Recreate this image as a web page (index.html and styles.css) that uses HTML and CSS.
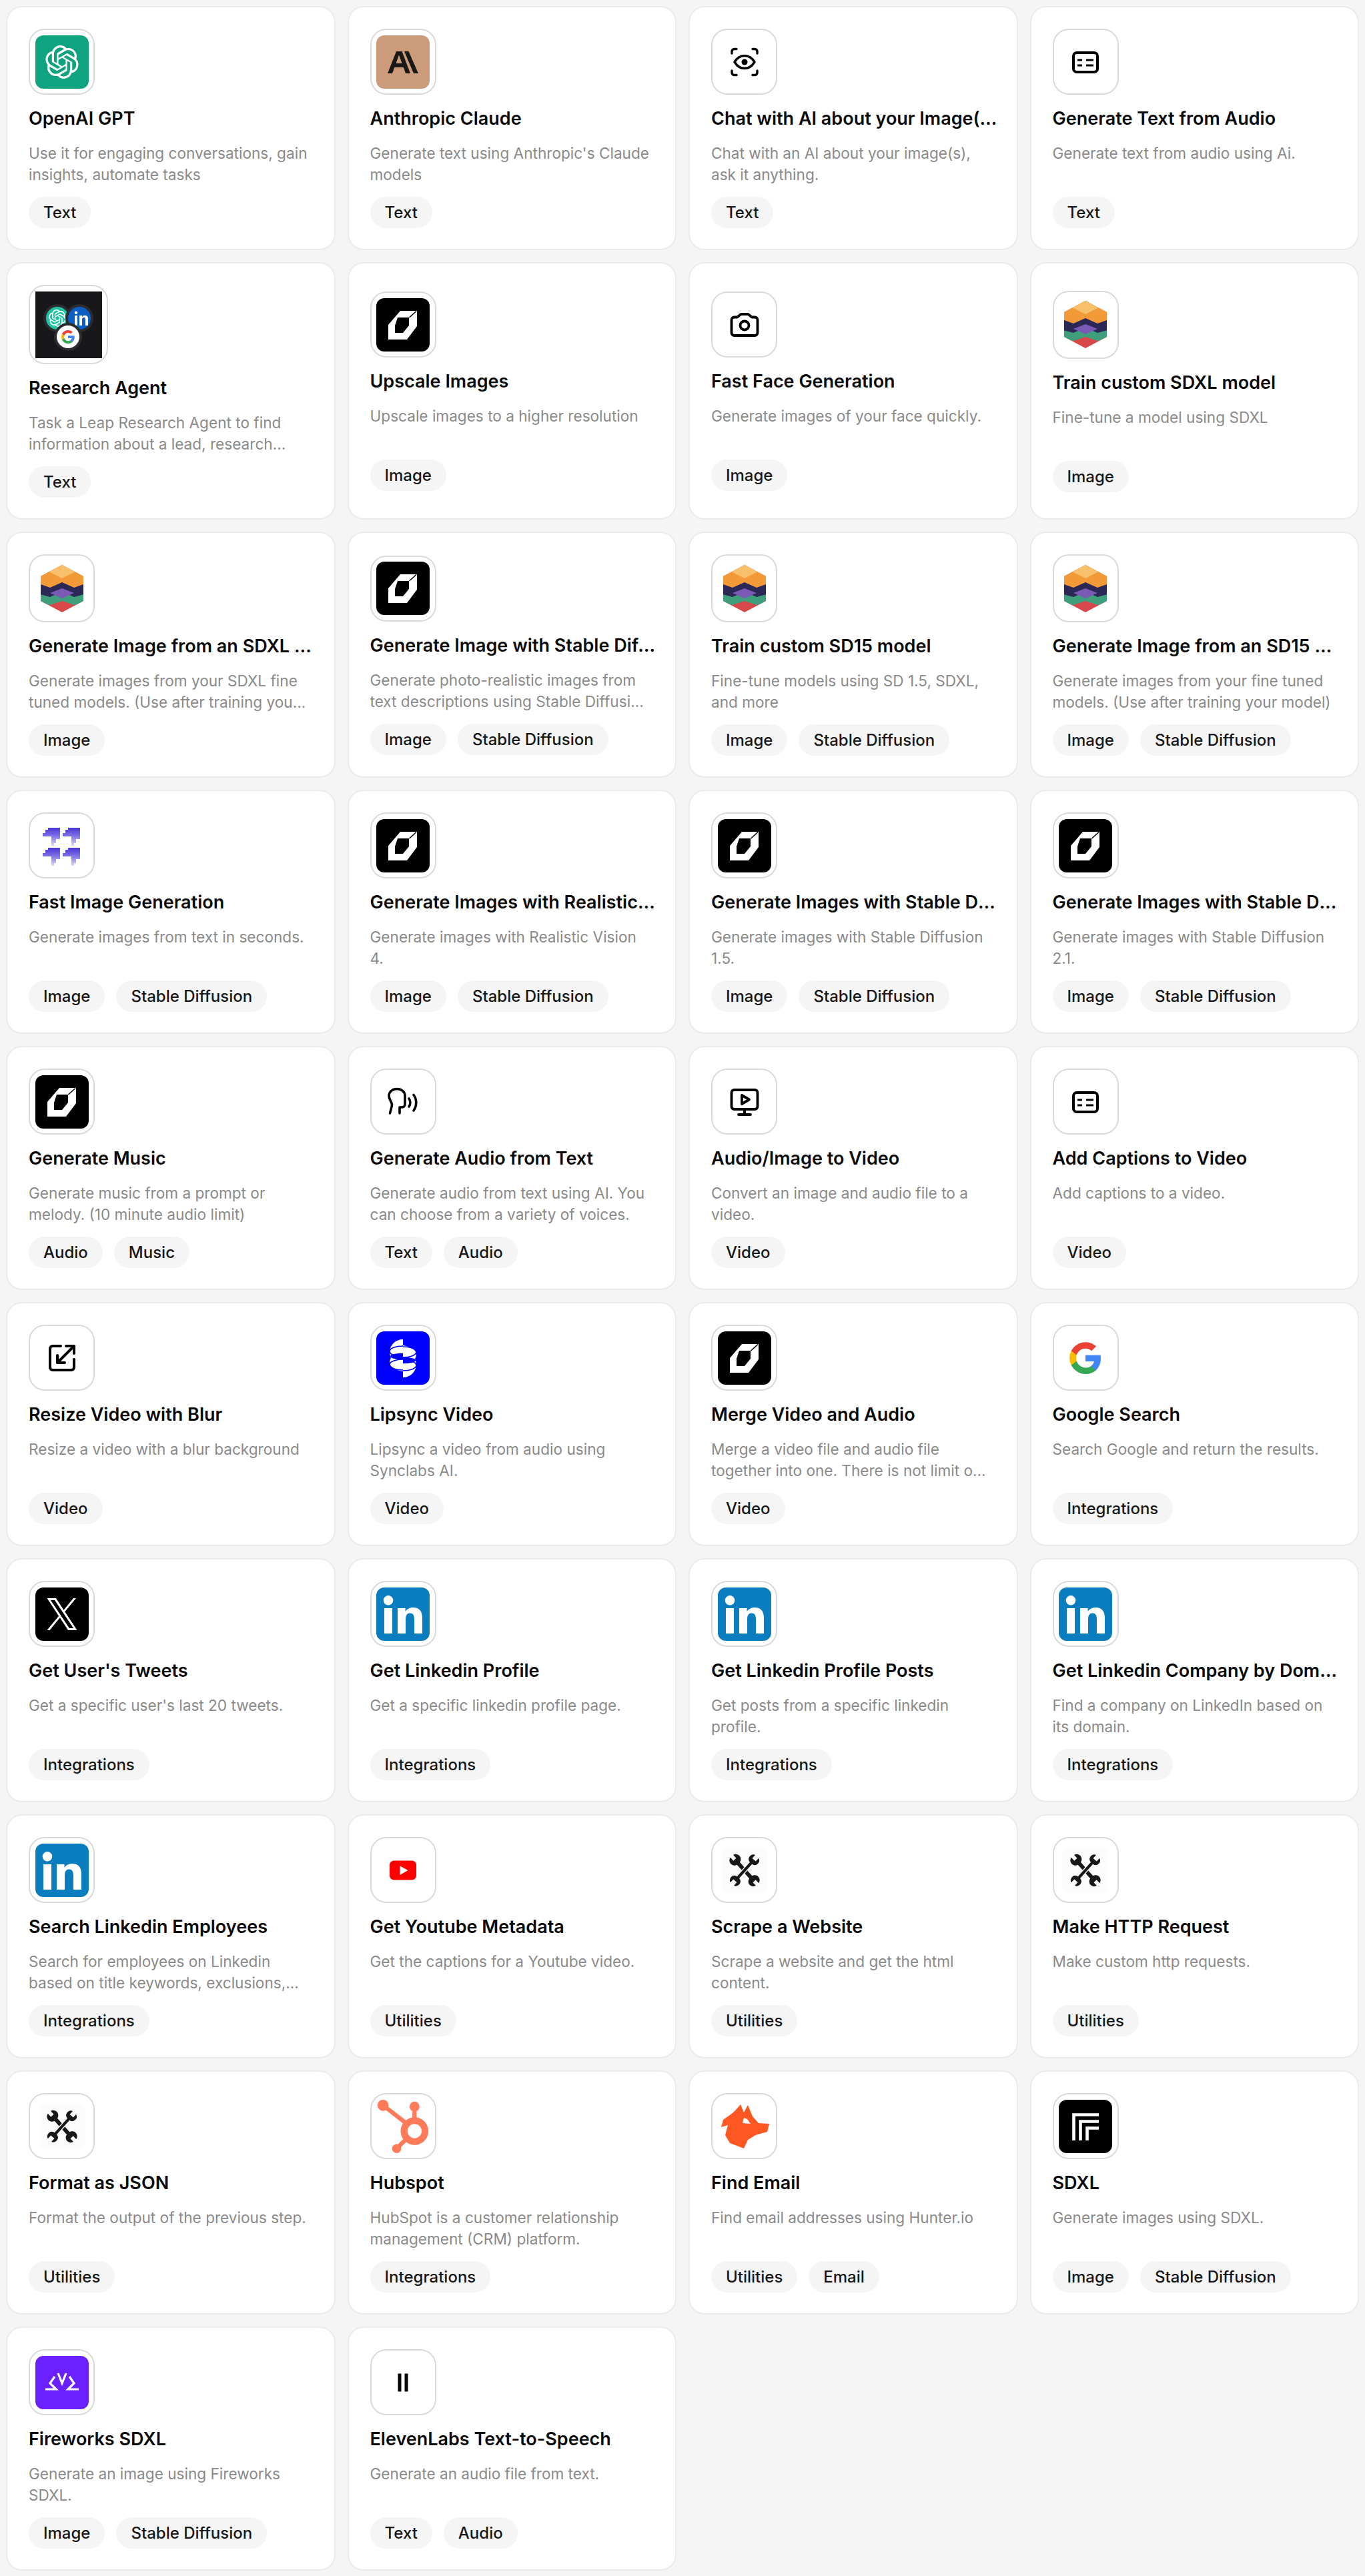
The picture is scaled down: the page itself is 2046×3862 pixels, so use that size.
FILE: index.html
```html
<!DOCTYPE html>
<html lang="en">
<head>
<meta charset="utf-8">
<title>Workflow steps</title>
<link rel="stylesheet" href="styles.css">
</head>
<body>
<svg class="defs" aria-hidden="true">
  <defs>
    <path id="knot" d="M22.2819 9.8211a5.9847 5.9847 0 0 0-.5157-4.9108 6.0462 6.0462 0 0 0-6.5098-2.9A6.0651 6.0651 0 0 0 4.9807 4.1818a5.9847 5.9847 0 0 0-3.9977 2.9 6.0462 6.0462 0 0 0 .7427 7.0966 5.98 5.98 0 0 0 .511 4.9107 6.051 6.051 0 0 0 6.5146 2.9001A5.9847 5.9847 0 0 0 13.2599 24a6.0557 6.0557 0 0 0 5.7718-4.2058 5.9894 5.9894 0 0 0 3.9977-2.9001 6.0557 6.0557 0 0 0-.7475-7.0729zm-9.022 12.6081a4.4755 4.4755 0 0 1-2.8764-1.0408l.1419-.0804 4.7783-2.7582a.7948.7948 0 0 0 .3927-.6813v-6.7369l2.02 1.1686a.071.071 0 0 1 .038.052v5.5826a4.504 4.504 0 0 1-4.4945 4.4944zm-9.6607-4.1254a4.4708 4.4708 0 0 1-.5346-3.0137l.142.0852 4.783 2.7582a.7712.7712 0 0 0 .7806 0l5.8428-3.3685v2.3324a.0804.0804 0 0 1-.0332.0615L9.74 19.9502a4.4992 4.4992 0 0 1-6.1408-1.6464zM2.3408 7.8956a4.485 4.485 0 0 1 2.3655-1.9728V11.6a.7664.7664 0 0 0 .3879.6765l5.8144 3.3543-2.0201 1.1685a.0757.0757 0 0 1-.071 0l-4.8303-2.7865A4.504 4.504 0 0 1 2.3408 7.872zm16.5963 3.8558L13.1038 8.364 15.1192 7.2a.0757.0757 0 0 1 .071 0l4.8303 2.7913a4.4944 4.4944 0 0 1-.6765 8.1042v-5.6772a.79.79 0 0 0-.407-.667zm2.0107-3.0231l-.142-.0852-4.7735-2.7818a.7759.7759 0 0 0-.7854 0L9.409 9.2297V6.8974a.0662.0662 0 0 1 .0284-.0615l4.8303-2.7866a4.4992 4.4992 0 0 1 6.6802 4.66zM8.3065 12.863l-2.02-1.1638a.0804.0804 0 0 1-.038-.0567V6.0742a4.4992 4.4992 0 0 1 7.3757-3.4537l-.142.0805L8.704 5.459a.7948.7948 0 0 0-.3927.6813zm1.0976-2.3654l2.602-1.4998 2.6069 1.4998v2.9994l-2.5974 1.4997-2.6067-1.4997Z"/>
    <g id="gletter">
      <path fill="#4285F4" d="M22.56 12.25c0-.78-.07-1.53-.2-2.25H12v4.26h5.92c-.26 1.37-1.04 2.53-2.21 3.31v2.77h3.57c2.08-1.92 3.28-4.74 3.28-8.09z"/>
      <path fill="#34A853" d="M12 23c2.97 0 5.46-.98 7.28-2.66l-3.57-2.77c-.98.66-2.23 1.06-3.71 1.06-2.86 0-5.29-1.93-6.16-4.53H2.18v2.84C3.99 20.53 7.7 23 12 23z"/>
      <path fill="#FBBC05" d="M5.84 14.09c-.22-.66-.35-1.36-.35-2.09s.13-1.43.35-2.09V7.07H2.18C1.43 8.55 1 10.22 1 12s.43 3.45 1.18 4.93l2.85-2.22.81-.62z"/>
      <path fill="#EA4335" d="M12 5.38c1.62 0 3.06.56 4.21 1.64l3.15-3.15C17.45 2.09 14.97 1 12 1 7.7 1 3.99 3.47 2.18 7.07l3.66 2.84c.87-2.6 3.3-4.53 6.16-4.53z"/>
    </g>
    <path id="wrench-shape" d="M-3 -14.500A7.900 7.900 0 0 1 -3 -30L-3 -23L3 -23L3 -30A7.900 7.900 0 0 1 3 -14.500L3 14.500A7.900 7.900 0 0 1 3 30L3 23L-3 23L-3 30A7.900 7.900 0 0 1 -3 14.500Z"/>
    <linearGradient id="fade" x1="0" y1="0" x2="0" y2="1">
      <stop offset="0" stop-color="#4a35d6"/>
      <stop offset=".45" stop-color="#7f70e6"/>
      <stop offset="1" stop-color="#ddd9fa"/>
    </linearGradient>
    <polygon id="step" fill="url(#fade)" points="8,0 26,0 26,17 20,17 20,23 17,23 17,27 13,27 13,13 0,13 0,8 4,8 4,3 8,3"/>
    <clipPath id="left-half"><rect x="0" y="0" width="40" height="80"/></clipPath>
    <clipPath id="hex"><polygon points="40,6 72,23 72,60 40,77 8,60 8,23"/></clipPath>
    <g id="sync-half" clip-path="url(#left-half)">
      <path fill="#fff" d="M40 12C29 12 21 20 20 30C20 34 21 37 22 40C20 43 20 46 20 48C21 54 30 58 40 60Z"/>
      <ellipse cx="40" cy="30" rx="20" ry="8" fill="none" stroke="#0000ff" stroke-width="1.600"/>
      <ellipse cx="40" cy="37.500" rx="19" ry="4.800" fill="#0000ff"/>
      <ellipse cx="40" cy="50" rx="20" ry="8" fill="none" stroke="#0000ff" stroke-width="1.600"/>
    </g>

    <symbol id="i-openai" viewBox="0 0 80 80">
      <rect width="80" height="80" rx="12" fill="#10a37f"/>
      <use href="#knot" fill="#fff" transform="translate(15 15) scale(2.08)"/>
    </symbol>
    <symbol id="i-claude" viewBox="0 0 80 80">
      <rect width="80" height="80" rx="12" fill="#cc9b7a"/>
      <path fill="#191917" fill-rule="evenodd" d="M17 57L30 24H38.500L51 57H44L40.800 48H27.300L24 57ZM29.500 42H38.600L34 29.500ZM42 24H48.500L63 57H56Z"/>
    </symbol>
    <symbol id="i-eye" viewBox="0 0 80 80">
      <g fill="none" stroke="#000" stroke-width="3.400" stroke-linecap="round" stroke-linejoin="round">
        <path d="M21 27V24A3.500 3.500 0 0 1 24.500 20.500H28M52 20.500H55.500A3.500 3.500 0 0 1 59 24V27M59 53V56A3.500 3.500 0 0 1 55.500 59.500H52M28 59.500H24.500A3.500 3.500 0 0 1 21 56V53"/>
        <path d="M25 40C29 33.500 34 30.500 40 30.500S51 33.500 55 40C51 46.500 46 49.500 40 49.500S29 46.500 25 40Z"/>
      </g>
      <circle cx="40" cy="40" r="4.500" fill="#000"/>
    </symbol>
    <symbol id="i-caption" viewBox="0 0 80 80">
      <rect x="22" y="26" width="36" height="29" rx="5" fill="none" stroke="#000" stroke-width="4"/>
      <path d="M28 37H35M41 37H52M28 45H35M41 45H52" stroke="#000" stroke-width="3.200" fill="none"/>
    </symbol>
    <symbol id="i-camera" viewBox="0 0 80 80">
      <path fill="none" stroke="#000" stroke-width="3.800" stroke-linejoin="round" d="M24.500 28.500H28.500C29.500 28.500 30 28 30.800 27.200L32.800 25.300C33.600 24.500 34.300 24 35.500 24H44.500C45.700 24 46.400 24.500 47.200 25.300L49.200 27.200C50 28 50.500 28.500 51.500 28.500H55.500A4 4 0 0 1 59.500 32.500V52A4 4 0 0 1 55.500 56H24.500A4 4 0 0 1 20.500 52V32.500A4 4 0 0 1 24.500 28.500Z"/>
      <circle cx="40" cy="41" r="6.500" fill="none" stroke="#000" stroke-width="3.800"/>
    </symbol>
    <symbol id="i-leap" viewBox="0 0 80 80">
      <rect width="80" height="80" rx="12" fill="#000"/>
      <path fill="#fff" fill-rule="evenodd" d="M36 19H61V42L46 62H18V40ZM32 29L28 41V52H40L49 41V29Z"/>
      <path d="M49.500 29L60 19.500" stroke="#000" stroke-width="1.600"/>
    </symbol>
    <symbol id="i-rainbow" viewBox="0 0 80 83">
      <g clip-path="url(#hex)">
        <rect width="80" height="83" fill="#d8474a"/>
        <polygon fill="#3f9f7c" points="0,30 22,38 40,30 58,38 80,30 80,60 58,66 40,60 22,66 0,60"/>
        <polygon fill="#2b2856" points="0,24 22,30 40,22 58,30 80,24 80,48 58,54 40,46 22,54 0,48"/>
        <polygon fill="#f39a38" points="40,0 80,20 80,32 58,40 40,32 22,40 0,32 0,20"/>
        <polygon fill="#f8c06a" points="40,6 60,16 40,26 20,16"/>
        <polygon fill="#7a5ab5" points="22,48 40,41 58,48 40,56"/>
      </g>
    </symbol>
    <symbol id="i-research" viewBox="0 0 100 100">
      <rect width="100" height="100" fill="#18181b"/>
      <circle cx="33" cy="40" r="19" fill="#20c4a0" stroke="#2b2b30" stroke-width="4"/>
      <use href="#knot" fill="#fff" transform="translate(20 27) scale(1.080)"/>
      <circle cx="66" cy="40" r="19" fill="#0a5fc4" stroke="#2b2b30" stroke-width="4"/>
      <path fill="#fff" d="M59 36H63V51H59ZM61 29.500A2.300 2.300 0 1 1 61 34.100A2.300 2.300 0 1 1 61 29.500ZM66 36H70V38C71 36.500 72.500 35.700 74.500 35.700C77.500 35.700 79 37.800 79 41V51H75V42C75 40.300 74.300 39 72.500 39S70 40.300 70 42V51H66Z"/>
      <circle cx="49" cy="68" r="19" fill="#fff" stroke="#2b2b30" stroke-width="4"/>
      <use href="#gletter" transform="translate(38 57) scale(.92)"/>
    </symbol>
    <symbol id="i-steps" viewBox="0 0 80 80">
      <use href="#step" x="11" y="13"/>
      <use href="#step" x="41" y="13"/>
      <use href="#step" x="11" y="43"/>
      <use href="#step" x="41" y="43"/>
    </symbol>
    <symbol id="i-speak" viewBox="0 0 80 80">
      <path fill="none" stroke="#000" stroke-width="3.600" stroke-linecap="round" stroke-linejoin="round" d="M20.500 57C21.500 52 23.500 48 23.500 44C23.500 40 19 37 19 31C19 25 24 20.500 31 20.500S43 25 43 31V43C43 46 41 48 38 48H35V57M49 35C51.500 38.500 51.500 43.500 49 47M56 29.500C61 36 61 46 56 53"/>
    </symbol>
    <symbol id="i-play" viewBox="0 0 80 80">
      <g fill="none" stroke="#000" stroke-width="3.800" stroke-linecap="round" stroke-linejoin="round">
        <rect x="20.500" y="22" width="39" height="29" rx="4"/>
        <path d="M40 51V59M31 59H49"/>
        <path d="M36 30V43L47 36.500Z"/>
      </g>
    </symbol>
    <symbol id="i-resize" viewBox="0 0 80 80">
      <g fill="none" stroke="#000" stroke-width="4" stroke-linecap="round" stroke-linejoin="round">
        <path d="M38 22H26A4 4 0 0 0 22 26V54A4 4 0 0 0 26 58H54A4 4 0 0 0 58 54V42"/>
        <path d="M33 47L58 22M46 22H58V33M33 36V47H44"/>
      </g>
    </symbol>
    <symbol id="i-sync" viewBox="0 0 80 80">
      <rect width="80" height="80" rx="12" fill="#0000ff"/>
      <use href="#sync-half"/>
      <use href="#sync-half" transform="rotate(180 40 40.500)"/>
    </symbol>
    <symbol id="i-x" viewBox="0 0 80 80">
      <rect width="80" height="80" rx="12" fill="#000"/>
      <path fill="#fff" transform="translate(17.500 16) scale(.0375 .0391)" d="M714.163 519.284L1160.89 0H1055.03L667.137 450.887L357.328 0H0L468.492 681.821L0 1226.37H105.866L515.491 750.218L842.672 1226.37H1200L714.137 519.284H714.163ZM569.165 687.828L521.697 619.934L144.011 79.6944H306.615L611.412 515.685L658.88 583.579L1055.08 1150.3H892.476L569.165 687.854V687.828Z"/>
    </symbol>
    <symbol id="i-google" viewBox="0 0 80 80">
      <use href="#gletter" transform="translate(14 14) scale(2.170)"/>
    </symbol>
    <symbol id="i-linkedin" viewBox="0 0 80 80">
      <rect width="80" height="80" rx="12" fill="#0a7dbf"/>
      <path fill="#fff" d="M12 31H24V69H12ZM18 12A7.300 7.300 0 1 1 18 26.600A7.300 7.300 0 1 1 18 12ZM32 31H43.500V36C46 32.500 50 30 55 30C65 30 69 36 69 46V69H57V48C57 43 56 38.500 50.500 38.500S44 43 44 48V69H32Z"/>
    </symbol>
    <symbol id="i-youtube" viewBox="0 0 80 80">
      <rect x="20" y="25.500" width="40" height="29" rx="6.500" fill="#f00"/>
      <polygon points="35.500,33.500 35.500,47 47.500,40" fill="#fff"/>
    </symbol>
    <symbol id="i-tools" viewBox="0 0 80 80">
      <rect x="6" y="6" width="68" height="68" rx="6" fill="#fcfcfc"/>
      <g fill="#181818">
        <use href="#wrench-shape" transform="translate(40 40) rotate(-42) scale(.95)"/>
        <use href="#wrench-shape" transform="translate(40 40) rotate(42) scale(.95)" stroke="#fff" stroke-width="1.400"/>
      </g>
    </symbol>
    <symbol id="i-hubspot" viewBox="0 0 80 80">
      <path fill="#ff7a59" transform="scale(3.333)" d="M18.164 7.93V5.084a2.198 2.198 0 001.267-1.978v-.067A2.2 2.2 0 0017.238.845h-.067a2.2 2.2 0 00-2.193 2.193v.067a2.196 2.196 0 001.252 1.973l.013.006v2.852a6.22 6.22 0 00-2.969 1.31l.012-.01-7.828-6.095A2.497 2.497 0 104.3 4.656l-.012.006 7.697 5.991a6.176 6.176 0 00-1.038 3.446c0 1.343.425 2.588 1.147 3.607l-.013-.02-2.342 2.343a1.968 1.968 0 00-.58-.095h-.002a2.033 2.033 0 102.033 2.033 1.978 1.978 0 00-.1-.595l.005.014 2.317-2.317a6.247 6.247 0 104.782-11.134l-.036-.005zm-.964 9.378a3.206 3.206 0 113.215-3.207v.002a3.206 3.206 0 01-3.207 3.206z"/>
    </symbol>
    <symbol id="i-hunter" viewBox="0 0 80 80">
      <path fill="#ff5722" fill-rule="evenodd" d="M34 7L39 19L45 8L52 25L61 35L77 36L74 48L56.500 53L45 60L39 73L18 65L11 53L15 38L5 41L8 30L22 20L27 15ZM39 27L37 35L49 36L44 29Z"/>
    </symbol>
    <symbol id="i-sdxl" viewBox="0 0 80 80">
      <rect width="80" height="80" rx="12" fill="#000"/>
      <path d="M22.500 61V22.500H60M32.500 61V32.500H60M42.500 61V42.500H60" fill="none" stroke="#fff" stroke-width="4.600"/>
    </symbol>
    <symbol id="i-fireworks" viewBox="0 0 80 80">
      <rect width="80" height="80" rx="12" fill="#6a20ff"/>
      <g fill="none" stroke="#fff" stroke-width="3.200" stroke-linejoin="miter">
        <path d="M34 26L40 41L46 26"/>
        <path d="M29 31L22 41L31 50H15M51 31L58 41L49 50H65"/>
      </g>
    </symbol>
    <symbol id="i-eleven" viewBox="0 0 80 80">
      <rect x="32.500" y="26.500" width="5" height="27" fill="#000"/>
      <rect x="42.500" y="26.500" width="5" height="27" fill="#000"/>
    </symbol>
  </defs>
</svg>

<main class="grid">
  <article class="card"><div class="ico"><svg class="img"><use href="#i-openai"/></svg></div><h3 class="title">OpenAI GPT</h3><p class="desc">Use it for engaging conversations, gain insights, automate tasks</p><div class="tags"><span class="tag">Text</span></div></article>
  <article class="card"><div class="ico"><svg class="img"><use href="#i-claude"/></svg></div><h3 class="title">Anthropic Claude</h3><p class="desc">Generate text using Anthropic's Claude models</p><div class="tags"><span class="tag">Text</span></div></article>
  <article class="card"><div class="ico"><svg class="img"><use href="#i-eye"/></svg></div><h3 class="title">Chat with AI about your Image(s) - ask it anything</h3><p class="desc">Chat with an AI about your image(s), ask it anything.</p><div class="tags"><span class="tag">Text</span></div></article>
  <article class="card"><div class="ico"><svg class="img"><use href="#i-caption"/></svg></div><h3 class="title">Generate Text from Audio</h3><p class="desc">Generate text from audio using Ai.</p><div class="tags"><span class="tag">Text</span></div></article>

  <article class="card"><div class="ico"><svg class="img img-lg"><use href="#i-research"/></svg></div><h3 class="title">Research Agent</h3><p class="desc">Task a Leap Research Agent to find information about a lead, research...</p><div class="tags"><span class="tag">Text</span></div></article>
  <article class="card"><div class="ico"><svg class="img"><use href="#i-leap"/></svg></div><h3 class="title">Upscale Images</h3><p class="desc">Upscale images to a higher resolution</p><div class="tags"><span class="tag">Image</span></div></article>
  <article class="card"><div class="ico"><svg class="img"><use href="#i-camera"/></svg></div><h3 class="title">Fast Face Generation</h3><p class="desc">Generate images of your face quickly.</p><div class="tags"><span class="tag">Image</span></div></article>
  <article class="card"><div class="ico"><svg class="img img-tall"><use href="#i-rainbow"/></svg></div><h3 class="title">Train custom SDXL model</h3><p class="desc">Fine-tune a model using SDXL</p><div class="tags"><span class="tag">Image</span></div></article>

  <article class="card"><div class="ico"><svg class="img img-tall"><use href="#i-rainbow"/></svg></div><h3 class="title">Generate Image from an SDXL model</h3><p class="desc">Generate images from your SDXL fine tuned models. (Use after training your model)</p><div class="tags"><span class="tag">Image</span></div></article>
  <article class="card"><div class="ico"><svg class="img"><use href="#i-leap"/></svg></div><h3 class="title">Generate Image with Stable Diffusion</h3><p class="desc">Generate photo-realistic images from text descriptions using Stable Diffusion models.</p><div class="tags"><span class="tag">Image</span><span class="tag">Stable Diffusion</span></div></article>
  <article class="card"><div class="ico"><svg class="img img-tall"><use href="#i-rainbow"/></svg></div><h3 class="title">Train custom SD15 model</h3><p class="desc">Fine-tune models using SD 1.5, SDXL, and more</p><div class="tags"><span class="tag">Image</span><span class="tag">Stable Diffusion</span></div></article>
  <article class="card"><div class="ico"><svg class="img img-tall"><use href="#i-rainbow"/></svg></div><h3 class="title">Generate Image from an SD15 model</h3><p class="desc">Generate images from your fine tuned models. (Use after training your model)</p><div class="tags"><span class="tag">Image</span><span class="tag">Stable Diffusion</span></div></article>

  <article class="card"><div class="ico"><svg class="img"><use href="#i-steps"/></svg></div><h3 class="title">Fast Image Generation</h3><p class="desc">Generate images from text in seconds.</p><div class="tags"><span class="tag">Image</span><span class="tag">Stable Diffusion</span></div></article>
  <article class="card"><div class="ico"><svg class="img"><use href="#i-leap"/></svg></div><h3 class="title">Generate Images with Realistic Vision</h3><p class="desc">Generate images with Realistic Vision 4.</p><div class="tags"><span class="tag">Image</span><span class="tag">Stable Diffusion</span></div></article>
  <article class="card"><div class="ico"><svg class="img"><use href="#i-leap"/></svg></div><h3 class="title">Generate Images with Stable Diffusion 1.5</h3><p class="desc">Generate images with Stable Diffusion 1.5.</p><div class="tags"><span class="tag">Image</span><span class="tag">Stable Diffusion</span></div></article>
  <article class="card"><div class="ico"><svg class="img"><use href="#i-leap"/></svg></div><h3 class="title">Generate Images with Stable Diffusion 2.1</h3><p class="desc">Generate images with Stable Diffusion 2.1.</p><div class="tags"><span class="tag">Image</span><span class="tag">Stable Diffusion</span></div></article>

  <article class="card"><div class="ico"><svg class="img"><use href="#i-leap"/></svg></div><h3 class="title">Generate Music</h3><p class="desc">Generate music from a prompt or melody. (10 minute audio limit)</p><div class="tags"><span class="tag">Audio</span><span class="tag">Music</span></div></article>
  <article class="card"><div class="ico"><svg class="img"><use href="#i-speak"/></svg></div><h3 class="title">Generate Audio from Text</h3><p class="desc">Generate audio from text using AI. You can choose from a variety of voices.</p><div class="tags"><span class="tag">Text</span><span class="tag">Audio</span></div></article>
  <article class="card"><div class="ico"><svg class="img"><use href="#i-play"/></svg></div><h3 class="title">Audio/Image to Video</h3><p class="desc">Convert an image and audio file to a video.</p><div class="tags"><span class="tag">Video</span></div></article>
  <article class="card"><div class="ico"><svg class="img"><use href="#i-caption"/></svg></div><h3 class="title">Add Captions to Video</h3><p class="desc">Add captions to a video.</p><div class="tags"><span class="tag">Video</span></div></article>

  <article class="card"><div class="ico"><svg class="img"><use href="#i-resize"/></svg></div><h3 class="title">Resize Video with Blur</h3><p class="desc">Resize a video with a blur background</p><div class="tags"><span class="tag">Video</span></div></article>
  <article class="card"><div class="ico"><svg class="img"><use href="#i-sync"/></svg></div><h3 class="title">Lipsync Video</h3><p class="desc">Lipsync a video from audio using Synclabs AI.</p><div class="tags"><span class="tag">Video</span></div></article>
  <article class="card"><div class="ico"><svg class="img"><use href="#i-leap"/></svg></div><h3 class="title">Merge Video and Audio</h3><p class="desc">Merge a video file and audio file together into one. There is not limit on the length of the files.</p><div class="tags"><span class="tag">Video</span></div></article>
  <article class="card"><div class="ico"><svg class="img"><use href="#i-google"/></svg></div><h3 class="title">Google Search</h3><p class="desc">Search Google and return the results.</p><div class="tags"><span class="tag">Integrations</span></div></article>

  <article class="card"><div class="ico"><svg class="img"><use href="#i-x"/></svg></div><h3 class="title">Get User's Tweets</h3><p class="desc">Get a specific user's last 20 tweets.</p><div class="tags"><span class="tag">Integrations</span></div></article>
  <article class="card"><div class="ico"><svg class="img"><use href="#i-linkedin"/></svg></div><h3 class="title">Get Linkedin Profile</h3><p class="desc">Get a specific linkedin profile page.</p><div class="tags"><span class="tag">Integrations</span></div></article>
  <article class="card"><div class="ico"><svg class="img"><use href="#i-linkedin"/></svg></div><h3 class="title">Get Linkedin Profile Posts</h3><p class="desc">Get posts from a specific linkedin profile.</p><div class="tags"><span class="tag">Integrations</span></div></article>
  <article class="card"><div class="ico"><svg class="img"><use href="#i-linkedin"/></svg></div><h3 class="title">Get Linkedin Company by Domain</h3><p class="desc">Find a company on LinkedIn based on its domain.</p><div class="tags"><span class="tag">Integrations</span></div></article>

  <article class="card"><div class="ico"><svg class="img"><use href="#i-linkedin"/></svg></div><h3 class="title">Search Linkedin Employees</h3><p class="desc">Search for employees on Linkedin based on title keywords, exclusions,...</p><div class="tags"><span class="tag">Integrations</span></div></article>
  <article class="card"><div class="ico"><svg class="img"><use href="#i-youtube"/></svg></div><h3 class="title">Get Youtube Metadata</h3><p class="desc">Get the captions for a Youtube video.</p><div class="tags"><span class="tag">Utilities</span></div></article>
  <article class="card"><div class="ico"><svg class="img"><use href="#i-tools"/></svg></div><h3 class="title">Scrape a Website</h3><p class="desc">Scrape a website and get the html content.</p><div class="tags"><span class="tag">Utilities</span></div></article>
  <article class="card"><div class="ico"><svg class="img"><use href="#i-tools"/></svg></div><h3 class="title">Make HTTP Request</h3><p class="desc">Make custom http requests.</p><div class="tags"><span class="tag">Utilities</span></div></article>

  <article class="card"><div class="ico"><svg class="img"><use href="#i-tools"/></svg></div><h3 class="title">Format as JSON</h3><p class="desc">Format the output of the previous step.</p><div class="tags"><span class="tag">Utilities</span></div></article>
  <article class="card"><div class="ico"><svg class="img"><use href="#i-hubspot"/></svg></div><h3 class="title">Hubspot</h3><p class="desc">HubSpot is a customer relationship management (CRM) platform.</p><div class="tags"><span class="tag">Integrations</span></div></article>
  <article class="card"><div class="ico"><svg class="img"><use href="#i-hunter"/></svg></div><h3 class="title">Find Email</h3><p class="desc">Find email addresses using Hunter.io</p><div class="tags"><span class="tag">Utilities</span><span class="tag">Email</span></div></article>
  <article class="card"><div class="ico"><svg class="img"><use href="#i-sdxl"/></svg></div><h3 class="title">SDXL</h3><p class="desc">Generate images using SDXL.</p><div class="tags"><span class="tag">Image</span><span class="tag">Stable Diffusion</span></div></article>

  <article class="card"><div class="ico"><svg class="img"><use href="#i-fireworks"/></svg></div><h3 class="title">Fireworks SDXL</h3><p class="desc">Generate an image using Fireworks SDXL.</p><div class="tags"><span class="tag">Image</span><span class="tag">Stable Diffusion</span></div></article>
  <article class="card"><div class="ico"><svg class="img"><use href="#i-eleven"/></svg></div><h3 class="title">ElevenLabs Text-to-Speech</h3><p class="desc">Generate an audio file from text.</p><div class="tags"><span class="tag">Text</span><span class="tag">Audio</span></div></article>
</main>
</body>
</html>
```

FILE: styles.css
```css
* { box-sizing: border-box; }
html, body { margin: 0; padding: 0; }
body {
  background: #f5f5f5;
  font-family: Inter, "Liberation Sans", sans-serif;
  color: #0a0a0a;
}
.defs { position: absolute; width: 0; height: 0; overflow: hidden; }
.grid {
  display: grid;
  grid-template-columns: repeat(4, minmax(0, 1fr));
  gap: 18px;
  padding: 9px 9px 8px;
  align-content: start;
}
.card {
  display: flex;
  flex-direction: column;
  justify-content: center;
  align-items: flex-start;
  gap: 18px;
  min-width: 0;
  padding: 32px 32px 31px;
  background: #fff;
  border: 2px solid #ebebeb;
  border-radius: 24px;
}
.ico {
  display: flex;
  padding: 7.5px;
  background: #fff;
  border: 2px solid #dadada;
  border-radius: 24px;
}
.img { display: block; width: 80px; height: 80px; }
.img-lg { width: 100px; height: 100px; }
.img-tall { height: 83px; }
.title {
  width: calc(100% + 6px);
  margin: 0;
  font-size: 27px;
  line-height: 36px;
  font-weight: 600;
  color: #0a0a0a;
  white-space: nowrap;
  overflow: hidden;
  text-overflow: ellipsis;
}
.desc {
  width: 100%;
  min-height: 64px;
  margin: 0;
  padding-right: 4px;
  font-size: 22.6px;
  line-height: 32px;
  font-weight: 400;
  color: #8a8a8a;
  display: -webkit-box;
  -webkit-box-orient: vertical;
  -webkit-line-clamp: 2;
  overflow: hidden;
}
.tags { display: flex; gap: 17px; margin-top: -1px; }
.tag {
  padding: 8px 22px;
  font-size: 24px;
  line-height: 31px;
  font-weight: 500;
  color: #171717;
  background: #f5f5f5;
  border-radius: 999px;
}
```
